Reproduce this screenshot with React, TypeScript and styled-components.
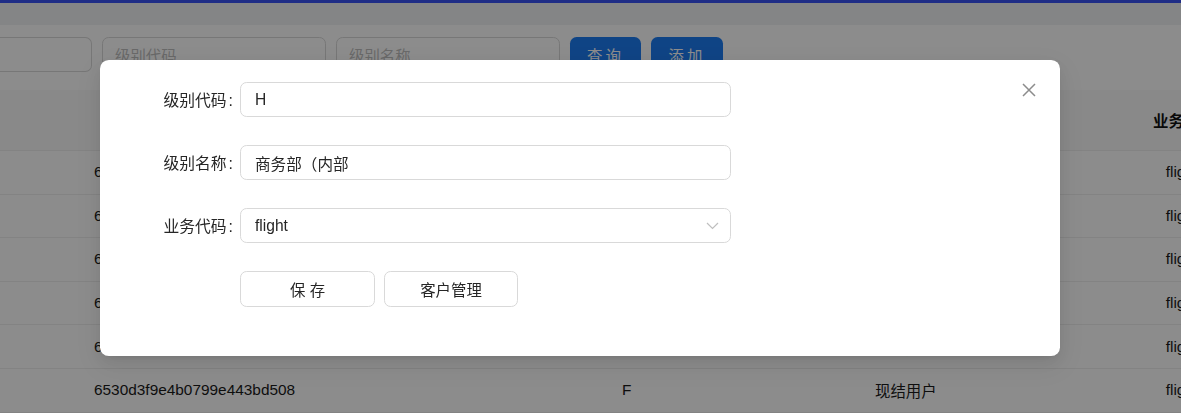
import React from "react";
import styled, { createGlobalStyle, css } from "styled-components";

const GlobalStyle = createGlobalStyle`
  html, body {
    margin: 0;
    padding: 0;
  }
  body {
    width: 1181px;
    height: 413px;
    overflow: hidden;
    background: #ffffff;
    font-family: "Liberation Sans", "Noto Sans CJK SC", sans-serif;
    font-size: 15.4px;
    color: #1f1f1f;
  }
`;

const Page = styled.div`
  display: flex;
  flex-direction: column;
  width: 1181px;
  height: 413px;
  overflow: hidden;
`;

const TopBar = styled.div`
  height: 3px;
  background: #3953f5;
`;

const Band = styled.div`
  height: 22px;
  background: #f0f2f5;
`;

const SearchBar = styled.div`
  display: flex;
  align-items: center;
  gap: 10px;
  padding: 12px 0 18px 0;
`;

const SearchInput = styled.div<{ clipped?: boolean }>`
  box-sizing: border-box;
  width: 224px;
  height: 35px;
  border: 1px solid #d9d9d9;
  border-radius: 6.6px;
  padding: 0 12px;
  display: flex;
  align-items: center;
  color: #bfbfbf;
  ${(p) =>
    p.clipped &&
    css`
      width: 92px;
      border-left: none;
      border-radius: 0 6.6px 6.6px 0;
    `}
`;

const PrimaryButton = styled.button<{ width: number }>`
  box-sizing: border-box;
  width: ${(p) => p.width}px;
  height: 35px;
  border: none;
  border-radius: 6.6px;
  background: #1d7cf2;
  color: #ffffff;
  font-family: inherit;
  font-size: 15.4px;
  letter-spacing: 3px;
`;

const Table = styled.div`
  display: flex;
  flex-direction: column;
`;

const TableRow = styled.div<{ head?: boolean }>`
  box-sizing: border-box;
  display: grid;
  grid-template-columns: 528px 253px 278px 58px;
  padding-left: 94px;
  align-items: center;
  height: 43.6px;
  border-bottom: 1px solid #eeeeee;
  color: #1a1a1a;
  white-space: nowrap;
  ${(p) =>
    p.head &&
    css`
      height: 61px;
      background: #fafafa;
      font-weight: 700;
      color: #111111;
      text-align: center;
    `}
`;

const Cell = styled.div<{ center?: boolean }>`
  ${(p) => p.center && "text-align: center;"}
`;

const Overlay = styled.div`
  position: fixed;
  inset: 0;
  background: rgba(0, 0, 0, 0.45);
`;

const Modal = styled.div`
  position: fixed;
  top: 60px;
  left: 100px;
  box-sizing: border-box;
  width: 960px;
  height: 296px;
  padding: 22px 0 49px 0;
  background: #ffffff;
  border-radius: 8.8px;
  box-shadow: 0 6px 16px 0 rgba(0, 0, 0, 0.08),
    0 3px 6px -4px rgba(0, 0, 0, 0.12), 0 9px 28px 8px rgba(0, 0, 0, 0.05);
`;

const CloseButton = styled.button`
  position: absolute;
  top: 19px;
  right: 20px;
  width: 22px;
  height: 22px;
  padding: 0;
  border: none;
  background: none;
  display: flex;
  align-items: center;
  justify-content: center;
`;

const Form = styled.div`
  display: grid;
  grid-template-columns: 140px 491px;
  row-gap: 28px;
  align-items: center;
`;

const Label = styled.label`
  text-align: right;
  padding-right: 7px;
  color: #262626;
  font-size: 15.8px;
  white-space: nowrap;
`;

const Colon = styled.span`
  margin-left: 2px;
`;

const Field = styled.div`
  box-sizing: border-box;
  height: 35px;
  border: 1px solid #d9d9d9;
  border-radius: 6.6px;
  padding: 0 11px 0 14px;
  display: flex;
  align-items: center;
  justify-content: space-between;
  color: #262626;
  font-size: 15.6px;
`;

const Actions = styled.div`
  grid-column: 2;
  display: flex;
  gap: 9px;
`;

const DefaultButton = styled.button<{ width: number }>`
  box-sizing: border-box;
  width: ${(p) => p.width}px;
  height: 36px;
  border: 1px solid #d9d9d9;
  border-radius: 6.6px;
  background: #ffffff;
  color: #262626;
  font-family: inherit;
  font-size: 15.4px;
`;

const rows = [
  ["6530d3a2e4b0799e443bd4f0", "A", "月结用户"],
  ["6530d3b4e4b0799e443bd4f6", "B", "月结用户"],
  ["6530d3c1e4b0799e443bd4fa", "C", "现结用户"],
  ["6530d3d7e4b0799e443bd4ff", "D", "现结用户"],
  ["6530d3e5e4b0799e443bd503", "E", "现结用户"],
  ["6530d3f9e4b0799e443bd508", "F", "现结用户"],
];

const fields = [
  { label: "级别代码", value: "H" },
  { label: "级别名称", value: "商务部（内部" },
];

export default function App() {
  return (
    <>
      <GlobalStyle />
      <Page>
        <TopBar />
        <Band />
        <SearchBar>
          <SearchInput clipped />
          <SearchInput>级别代码</SearchInput>
          <SearchInput>级别名称</SearchInput>
          <PrimaryButton width={71}>查询</PrimaryButton>
          <PrimaryButton width={72}>添加</PrimaryButton>
        </SearchBar>
        <Table>
          <TableRow head>
            <Cell>ID</Cell>
            <Cell>级别代码</Cell>
            <Cell>级别名称</Cell>
            <Cell>业务代码</Cell>
          </TableRow>
          {rows.map((r) => (
            <TableRow key={r[0]}>
              <Cell>{r[0]}</Cell>
              <Cell>{r[1]}</Cell>
              <Cell>{r[2]}</Cell>
              <Cell center>flight</Cell>
            </TableRow>
          ))}
        </Table>
      </Page>
      <Overlay />
      <Modal>
        <CloseButton aria-label="close">
          <svg width="14" height="14" viewBox="0 0 14 14">
            <path d="M1 1L13 13M13 1L1 13" stroke="#8c8c8c" strokeWidth="1.5" />
          </svg>
        </CloseButton>
        <Form>
          {fields.map((f) => (
            <React.Fragment key={f.label}>
              <Label>
                {f.label}
                <Colon>:</Colon>
              </Label>
              <Field>{f.value}</Field>
            </React.Fragment>
          ))}
          <Label>
            业务代码<Colon>:</Colon>
          </Label>
          <Field>
            flight
            <svg width="13" height="8" viewBox="0 0 13 8">
              <path d="M1 1L6.5 6.5L12 1" fill="none" stroke="#bfbfbf" strokeWidth="1.2" />
            </svg>
          </Field>
          <Actions>
            <DefaultButton width={135}>保 存</DefaultButton>
            <DefaultButton width={134}>客户管理</DefaultButton>
          </Actions>
        </Form>
      </Modal>
    </>
  );
}
